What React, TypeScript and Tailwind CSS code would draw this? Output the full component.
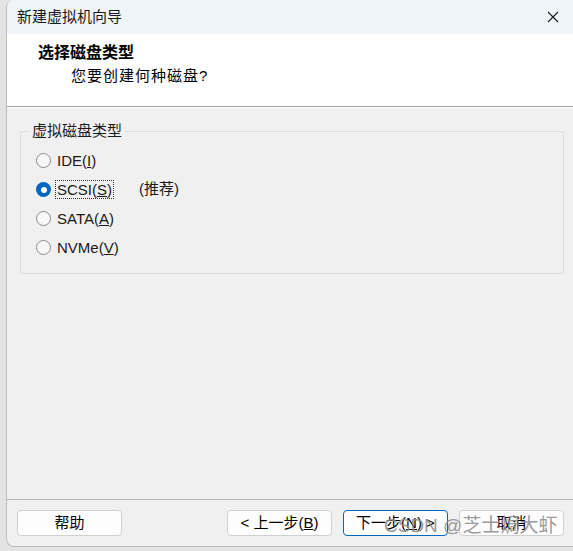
import { useState } from "react";

const font = "font-['Liberation_Sans','Noto_Sans_CJK_SC',sans-serif]";

const options = [
	{ id: "ide", label: "IDE(", key: "I", tail: ")" },
	{ id: "scsi", label: "SCSI(", key: "S", tail: ")", note: "(推荐)" },
	{ id: "sata", label: "SATA(", key: "A", tail: ")" },
	{ id: "nvme", label: "NVMe(", key: "V", tail: ")" },
];

function Radio({ checked }: { checked: boolean }) {
	if (checked) {
		return (
			<span className="flex h-[15px] w-[15px] items-center justify-center rounded-full bg-[#0067c0]">
				<span className="h-[6px] w-[6px] rounded-full bg-white" />
			</span>
		);
	}
	return <span className="h-[15px] w-[15px] rounded-full border border-[#8a8a8a] bg-[#f7f7f7]" />;
}

function Btn({ name, primary }: { name: React.ReactNode; primary?: boolean }) {
	return (
		<button
			className={
				primary
					? "flex h-[26px] w-[105px] items-center justify-center rounded-[4px] border border-[#0067c0] bg-white text-[15px] text-black"
					: "flex h-[26px] w-[105px] items-center justify-center rounded-[4px] border border-[#d0d0d0] bg-[#fdfdfd] text-[15px] text-black"
			}
		>
			{name}
		</button>
	);
}

export default function App() {
	const [selected, setSelected] = useState("scsi");

	return (
		<div className={`relative flex h-[551px] w-[573px] bg-[#e3e3e3] ${font}`}>
			<div className="ml-[6px] flex h-[547px] flex-1 flex-col overflow-hidden rounded-l-[8px] border-b border-l border-[#bdbdbd] bg-[#f0f0f0]">
				{/* title bar */}
				<div className="flex h-[34px] items-center justify-between bg-[#eff4f9] pl-[10px] pr-[12px]">
					<span className="text-[15px] text-[#1a1a1a]">新建虚拟机向导</span>
					<svg width="12" height="12" viewBox="0 0 12 12" className="mr-[2px]">
						<path d="M1 1 L11 11 M11 1 L1 11" stroke="#1a1a1a" strokeWidth="1.1" />
					</svg>
				</div>

				{/* header */}
				<div className="flex h-[72px] flex-col bg-white pl-[31px] pt-[9px]">
					<span className="text-[16px] font-bold leading-[20px] text-black">选择磁盘类型</span>
					<span className="ml-[33px] mt-[3px] text-[15px] tracking-[1px] leading-[20px] text-black">您要创建何种磁盘?</span>
				</div>
				<div className="h-[1px] bg-[#a0a0a0]" />
				<div className="h-[1px] bg-white" />

				{/* body */}
				<div className="flex-1 px-[13px] pt-[14px]">
					<fieldset className="h-[152px] w-[544px] rounded-[2px] border border-[#dcdcdc] px-[15px] pb-[12px]">
						<legend className="ml-[-7px] px-[3px] text-[15px] leading-[18px] text-[#1a1a1a]">虚拟磁盘类型</legend>
						<div className="mt-[6px] flex flex-col">
							{options.map((o) => (
								<label
									key={o.id}
									className="flex h-[29px] cursor-default items-center"
									onClick={() => setSelected(o.id)}
								>
									<Radio checked={selected === o.id} />
									<span
										className={
											selected === o.id
												? "ml-[4px] border border-dotted border-[#333] px-[1px] text-[15px] leading-[17px] text-[#1a1a1a]"
												: "ml-[5px] px-[1px] text-[15px] leading-[17px] text-[#1a1a1a]"
										}
									>
										{o.label}
										<span className="underline">{o.key}</span>
										{o.tail}
									</span>
									{o.note && (
										<span className="ml-[25px] text-[15px] text-[#1a1a1a]">{o.note}</span>
									)}
								</label>
							))}
						</div>
					</fieldset>
				</div>

				{/* footer */}
				<div className="h-[1px] bg-[#b4b4b4]" />
				<div className="flex h-[46px] items-start pl-[10px] pt-[10px]">
					<Btn name="帮助" />
					<div className="ml-[105px] flex gap-[11px]">
						<Btn
							name={
								<span>
									&lt; 上一步(<span className="underline">B</span>)
								</span>
							}
						/>
						<Btn
							primary
							name={
								<span>
									下一步(<span className="underline">N</span>) &gt;
								</span>
							}
						/>
						<Btn name="取消" />
					</div>
				</div>
			</div>

			{/* watermark */}
			<span className="pointer-events-none absolute left-[384px] top-[512px] z-10 whitespace-nowrap text-[19px] leading-[28px] text-[#8e8e8e]/90">
				CSDN @芝士焗大虾
			</span>
		</div>
	);
}
